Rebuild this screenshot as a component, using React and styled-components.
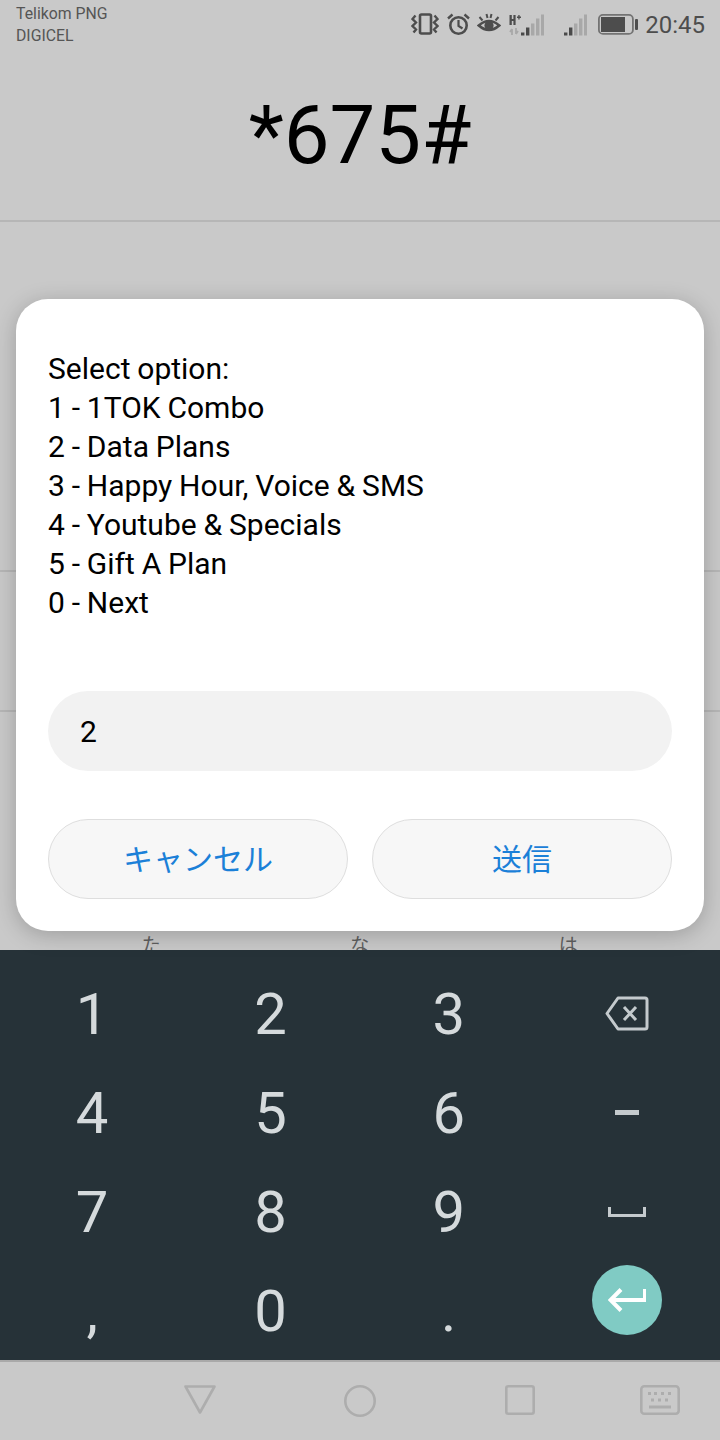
import styled, { createGlobalStyle } from "styled-components";

const GlobalStyle = createGlobalStyle`
  html, body {
    margin: 0;
    padding: 0;
    background: #c9c9c9;
  }
  * {
    box-sizing: border-box;
  }
`;

const jp = `Roboto, "Noto Sans CJK JP", sans-serif`;

const Page = styled.div`
  position: relative;
  width: 720px;
  height: 1440px;
  overflow: hidden;
  display: flex;
  flex-direction: column;
  background: #c9c9c9;
  font-family: ${jp};
`;

const Behind = styled.div`
  height: 950px;
  display: flex;
  flex-direction: column;
`;

const Header = styled.div`
  height: 222px;
  border-bottom: 2px solid #b6b6b6;
  display: flex;
  flex-direction: column;
`;

const StatusBar = styled.div`
  height: 50px;
  padding: 2px 15px 0 16px;
  display: flex;
  justify-content: space-between;
  color: #4d4d4d;
`;

const Carriers = styled.div`
  font-size: 15.8px;
  line-height: 22px;
  padding-top: 1px;
  color: #555;
`;

const StatusIcons = styled.div`
  display: flex;
  align-items: flex-start;
  padding-top: 11px;
`;

const StatusIcon = styled.svg`
  display: block;
  flex: none;
  margin-left: ${(p) => p.$gap || 0}px;
`;

const Clock = styled.span`
  margin-left: 7px;
  margin-top: -1px;
  font-size: 24px;
  line-height: 26px;
  color: #4d4d4d;
`;

const Dialed = styled.div`
  margin-top: 26px;
  text-align: center;
  font-size: 81.5px;
  line-height: 118px;
  color: #000;
`;

const Row = styled.div`
  height: ${(p) => p.$h}px;
  border-bottom: 2px solid #b6b6b6;
`;

const KanaRow = styled.div`
  flex: 1;
  overflow: hidden;
  padding: 222px 0 0 47px;
  display: grid;
  grid-template-columns: repeat(3, 208.5px);
  justify-items: center;
  font-size: 19px;
  line-height: 24px;
  color: #5f5f5f;
`;

const Dialog = styled.div`
  position: absolute;
  top: 299px;
  left: 16px;
  width: 688px;
  height: 632px;
  padding: 50px 32px 32px;
  background: #fff;
  border-radius: 32px;
  box-shadow: 0 4px 22px rgba(0, 0, 0, 0.22);
  display: flex;
  flex-direction: column;
`;

const Message = styled.div`
  font-size: 30px;
  line-height: 39px;
  word-spacing: -0.6px;
  color: #000;
  height: 273px;
  white-space: pre-line;
`;

const Input = styled.div`
  margin-top: 69px;
  height: 80px;
  border-radius: 40px;
  background: #f2f2f2;
  padding-left: 32px;
  display: flex;
  align-items: center;
  font-size: 30px;
  color: #000;
`;

const Buttons = styled.div`
  margin-top: 48px;
  display: grid;
  grid-template-columns: 300px 300px;
  gap: 24px;
`;

const Button = styled.button`
  height: 80px;
  border-radius: 40px;
  border: 1px solid #dedede;
  background: #f7f7f7;
  color: #1b80d8;
  font-family: ${jp};
  font-size: 30px;
  padding: 0 0 4px;
`;

const Keyboard = styled.div`
  height: 410px;
  padding: 14px 4px 0 3px;
  background: #263238;
  display: grid;
  grid-template-columns: repeat(4, 178.3px);
  grid-auto-rows: 99px;
`;

const Key = styled.div`
  display: flex;
  align-items: center;
  justify-content: center;
  font-size: 58px;
  color: #d5dadc;
  padding-bottom: ${(p) => p.$lift || 0}px;
`;

const EnterKey = styled.div`
  width: 70px;
  height: 70px;
  border-radius: 50%;
  background: #80cbc4;
  display: flex;
  align-items: center;
  justify-content: center;
`;

const NavBar = styled.div`
  flex: 1;
  border-top: 2px solid #a9a9a9;
  display: grid;
  grid-template-columns: 40px 32px 128px 32px 129px 30px 105px 40px;
  padding: 23px 0 0 144px;
`;

const NavIcon = styled.svg`
  display: block;
  grid-column: ${(p) => p.$col};
  grid-row: 1;
`;

// five thin bars, the first ones dark
function Signal({ gap }) {
  const heights = [3, 8, 12, 17, 21];
  return (
    <StatusIcon $gap={gap} width="23" height="23" viewBox="0 0 23 23">
      {heights.map((h, i) => (
        <rect
          key={i}
          x={i * 5}
          y={23 - h - 0.5}
          width="3.4"
          height={h}
          fill={i < 2 ? "#4a4a4a" : "#a8a8a8"}
        />
      ))}
    </StatusIcon>
  );
}

export default function App() {
  return (
    <Page>
      <GlobalStyle />
      <Behind>
        <Header>
          <StatusBar>
            <Carriers>
              Telikom PNG
              <br />
              DIGICEL
            </Carriers>
            <StatusIcons>
              {/* vibrate */}
              <StatusIcon width="28" height="22" viewBox="0 0 28 22" fill="none" stroke="#4d4d4d">
                <rect x="9" y="1.5" width="11" height="19" rx="1.5" strokeWidth="2.6" />
                <path d="M4.5 2.5 L1.5 6 L5 9.5 L1.5 13 L5 16.5 L2.5 19.5 M23.5 2.5 L26.5 6 L23 9.5 L26.5 13 L23 16.5 L25.5 19.5" strokeWidth="2.4" />
              </StatusIcon>
              {/* alarm */}
              <StatusIcon $gap={8} width="23" height="22" viewBox="0 0 23 22" fill="none" stroke="#4d4d4d">
                <circle cx="11.5" cy="12.5" r="8.2" strokeWidth="2.6" />
                <path d="M11.5 7 V12.8 L15.5 15.5" strokeWidth="2.2" />
                <path d="M1 5.5 L5.5 1.5 M22 5.5 L17.5 1.5" strokeWidth="2.4" />
              </StatusIcon>
              {/* eye comfort */}
              <StatusIcon $gap={7} width="24" height="21" viewBox="0 0 24 21" fill="none" stroke="#4d4d4d">
                <path d="M1.8 12.5 Q12 3.5 22.2 12.5 Q12 21.5 1.8 12.5 Z" strokeWidth="2.6" />
                <circle cx="12" cy="12.5" r="4.6" fill="#4d4d4d" stroke="none" />
                <path d="M2.5 4 L5.5 7.5 M9.5 1 L10.5 5 M14.5 1 L13.5 5 M21.5 4 L18.5 7.5" strokeWidth="2" />
              </StatusIcon>
              {/* H+ data */}
              <StatusIcon $gap={8} width="12" height="23" viewBox="0 0 12 23">
                <path d="M0.5 2 H2.8 V6 H4.4 V2 H6.6 V12 H4.4 V8 H2.8 V12 H0.5 Z M8 3.6 H9.3 V2 H10.6 V3.6 H12 V5 H10.6 V6.6 H9.3 V5 H8 Z" fill="#4d4d4d" />
                <path d="M3 16 V22 M7 15 V21 M1 19 L3 16 M9 18 L7 21" stroke="#a8a8a8" strokeWidth="1.8" fill="none" />
              </StatusIcon>
              <Signal />
              <Signal gap={20} />
              {/* battery */}
              <StatusIcon $gap={11} width="40" height="22" viewBox="0 0 40 22">
                <rect x="0.9" y="1.9" width="34" height="19" rx="4" fill="none" stroke="#737373" strokeWidth="1.8" />
                <rect x="3" y="4" width="24" height="15" fill="#4d4d4d" />
                <rect x="37" y="6" width="3" height="11" rx="1" fill="#4d4d4d" />
              </StatusIcon>
              <Clock>20:45</Clock>
            </StatusIcons>
          </StatusBar>
          <Dialed>*675#</Dialed>
        </Header>
        <Row $h={350} />
        <Row $h={140} />
        <KanaRow>
          <span>た</span>
          <span>な</span>
          <span>は</span>
        </KanaRow>
      </Behind>

      <Keyboard>
        <Key>1</Key>
        <Key>2</Key>
        <Key>3</Key>
        <Key>
          <svg width="44" height="35" viewBox="0 0 44 35" fill="none" stroke="#c4cacd">
            <path d="M13 2 H40 Q42 2 42 4 V31 Q42 33 40 33 H13 L2 17.5 Z" strokeWidth="3" strokeLinejoin="round" />
            <path d="M19 11 L31 24 M31 11 L19 24" strokeWidth="3" />
          </svg>
        </Key>
        <Key>4</Key>
        <Key>5</Key>
        <Key>6</Key>
        <Key>
          <svg width="24" height="6" viewBox="0 0 24 6">
            <rect width="24" height="5" fill="#c4cacd" />
          </svg>
        </Key>
        <Key>7</Key>
        <Key>8</Key>
        <Key>9</Key>
        <Key>
          <svg width="38" height="10" viewBox="0 0 38 10" fill="#c4cacd">
            <path d="M0 0 H3 V7 H35 V0 H38 V10 H0 Z" />
          </svg>
        </Key>
        <Key>,</Key>
        <Key>0</Key>
        <Key>.</Key>
        <Key $lift={22}>
          <EnterKey>
            <svg width="38" height="24" viewBox="0 0 38 24" fill="none" stroke="#fff" strokeWidth="4">
              <path d="M37 1 V12 H3 M13 1.5 L2.5 12 L13 22.5" />
            </svg>
          </EnterKey>
        </Key>
      </Keyboard>

      <NavBar>
        <NavIcon $col={2} width="32" height="29" viewBox="0 0 32 29" fill="none" stroke="#adadad" strokeWidth="2.6" strokeLinejoin="round">
          <path d="M1.5 1.5 H30.5 L16 27.5 Z" />
        </NavIcon>
        <NavIcon $col={4} width="32" height="32" viewBox="0 0 32 32" fill="none" stroke="#adadad" strokeWidth="2.6">
          <circle cx="16" cy="16" r="14.7" />
        </NavIcon>
        <NavIcon $col={6} width="30" height="30" viewBox="0 0 30 30" fill="none" stroke="#adadad" strokeWidth="2.6">
          <rect x="1.3" y="1.3" width="27.4" height="27.4" rx="2" />
        </NavIcon>
        <NavIcon $col={8} width="40" height="30" viewBox="0 0 40 30" fill="none" stroke="#adadad">
          <rect x="1.3" y="1.3" width="37.4" height="27.4" rx="3" strokeWidth="2.6" />
          <path d="M8 8.5 H11 M14 8.5 H17 M21 8.5 H24 M28 8.5 H31 M11 15 H14 M18 15 H21 M25 15 H28" strokeWidth="3" />
          <path d="M9 22 H31" strokeWidth="3" />
        </NavIcon>
      </NavBar>

      <Dialog>
        <Message>
          {`Select option:
1 - 1TOK Combo
2 - Data Plans
3 - Happy Hour, Voice & SMS
4 - Youtube & Specials
5 - Gift A Plan
0 - Next`}
        </Message>
        <Input>2</Input>
        <Buttons>
          <Button>キャンセル</Button>
          <Button>送信</Button>
        </Buttons>
      </Dialog>
    </Page>
  );
}
